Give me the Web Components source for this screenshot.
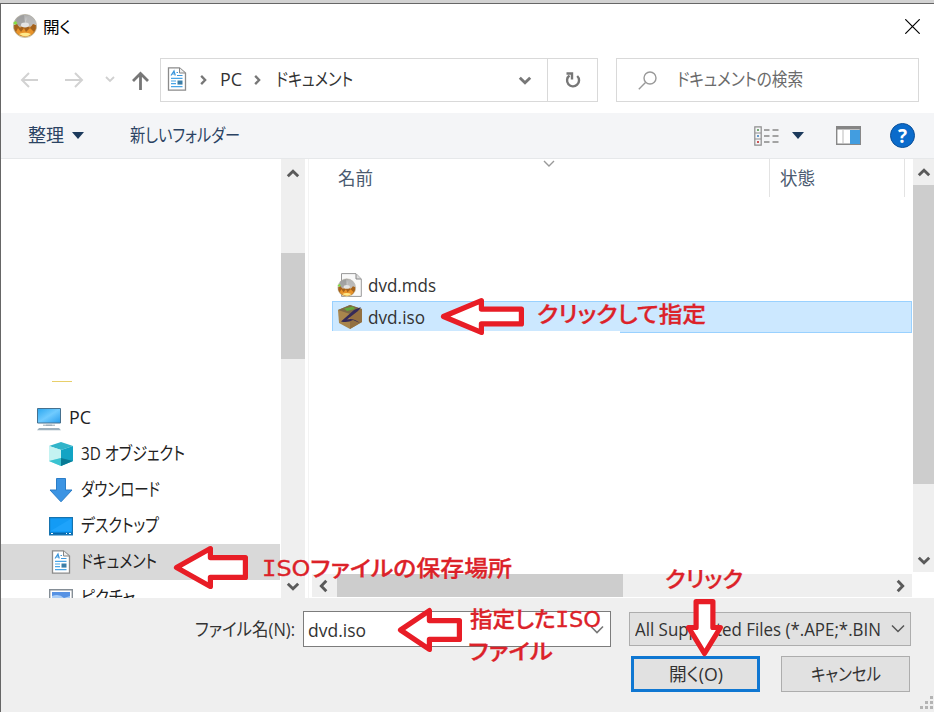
<!DOCTYPE html>
<html lang="ja">
<head>
<meta charset="utf-8">
<title>開く</title>
<style>
body {
  display: flow-root;
  margin: 0;
  width: 934px;
  height: 712px;
  overflow: hidden;
  position: relative;
  background: #d2d2d2;
  font: 18px/1 "Open Sans", "Noto Sans CJK JP", sans-serif;
  color: #333;
}
</style>
</head>
<body>
<file-dialog>
  <title-bar><fit-text width="28">開く</fit-text></title-bar>
  <address-row></address-row>
  <command-bar></command-bar>
  <nav-pane>
    <nav-item icon="pc" root><fit-text width="22">PC</fit-text></nav-item>
    <nav-item icon="cube"><fit-text width="104">3D オブジェクト</fit-text></nav-item>
    <nav-item icon="down"><fit-text width="79">ダウンロード</fit-text></nav-item>
    <nav-item icon="desk"><fit-text width="78">デスクトップ</fit-text></nav-item>
    <nav-item icon="doc" selected><fit-text width="76">ドキュメント</fit-text></nav-item>
    <nav-item icon="pic"><fit-text width="54">ピクチャ</fit-text></nav-item>
  </nav-pane>
  <file-list>
    <file-row icon="mds"><fit-text width="68">dvd.mds</fit-text></file-row>
    <file-row icon="iso" selected><fit-text width="57">dvd.iso</fit-text></file-row>
  </file-list>
  <dialog-footer></dialog-footer>
</file-dialog>

<call-arrow style="left:440px;top:298px" w="84" h="37" neck="44" shaft="8.5"></call-arrow>
<call-arrow style="left:173px;top:546px" w="75" h="43" neck="40" shaft="9"></call-arrow>
<call-arrow style="left:397px;top:607.5px" w="65" h="44" neck="35" shaft="10"></call-arrow>
<call-arrow style="left:685.5px;top:599px" w="37" h="58.5" neck="30" shaft="7.5" down></call-arrow>
<call-note style="left:537px;top:303px"><fit-text width="169">クリックして指定</fit-text></call-note>
<call-note style="left:262px;top:557px"><fit-text width="250"><i>I</i>SOファイルの保存場所</fit-text></call-note>
<call-note style="left:665px;top:568px"><fit-text width="78">クリック</fit-text></call-note>
<call-note style="left:470px;top:608px"><fit-text width="131">指定した<i>I</i>SO</fit-text></call-note>
<call-note style="left:468px;top:640px"><fit-text width="85">ファイル</fit-text></call-note>

<script>
// attaches an open root filled with the class's template()
class Base extends HTMLElement {
	constructor() {
		super();
		this.attachShadow({mode: 'open'}).innerHTML = this.template();
	}
}

const disc = (x, y, s) => `
<g transform="translate(${x} ${y}) scale(${s})">
  <circle cx="12" cy="12" r="11.6" fill="url(#g)" stroke="#aaa28e" stroke-width=".6"/>
  <path d="M1 10Q3 2 11 1L12 9L7 12Z" fill="#999" opacity=".8"/>
  <path d="M12 9L16 1Q22 4 23 10L17 12Z" fill="#b5b5b5" opacity=".8"/>
  <path d="M1 11L4 10L7 14L10 12H14L17 14L20 10L23 11Q23 18 18 21Q12 24 6 21Q1 18 1 11Z" fill="#a5621c"/>
  <path d="M3 18L5 14L8 18L11 14L13 18L17 14L21 18Q18 22.4 12 22.4Q6.5 22.4 3 18Z" fill="#e8932a"/>
  <path d="M6 20Q12 17.5 18 20Q13 24.5 6 20Z" fill="#ffe98a"/>
  <ellipse cx="12" cy="11" rx="4" ry="2.4" fill="#e4e4e4"/>
  <path d="M0 9L2.5 7L4.5 9L2.5 11Z" fill="#85dc45"/>
</g>`;
const grad = `<defs><linearGradient id="g" x2="0" y2="1">
  <stop stop-color="#aaa"/><stop offset=".45" stop-color="#dedede"/><stop offset=".6" stop-color="#b87526"/><stop offset="1" stop-color="#fff3bb"/>
</linearGradient></defs>`;

const ICONS = {
	app: grad + disc(0, 0, 1),
	doc: `<path d="M3.5 .8H14.5L20.5 6V23.2H3.5Z" fill="#fff" stroke="#8b8b8b" stroke-width="1.3"/>
		<path d="M14.5 1V6H20" fill="#eee" stroke="#858585"/>
		<path d="M6 8.5L9 4L10.3 8.5M7 7H10M11.5 5.5H13M12 8.5H17.5" stroke="#3f98dc" stroke-width="1.2" fill="none"/>
		<path d="M6 11.3H17.5M6 14H11M6 16.7H11M6 19.7H17.5" stroke="#4aa5e6" stroke-width="1.2"/>
		<path d="M12.5 13.5H17.5V17.6H12.5Z" fill="#3b7ea8"/>`,
	pc: `<path d="M.5 2.5H23.5V17H.5Z" fill="url(#p)" stroke="#46708e"/>
		<path d="M9 18.5H15V20H9Z" fill="#b5c3cb"/><path d="M6 19.2H18" stroke="#95a7b2"/>
		<path d="M2 22H22L24 24.3H0Z" fill="#9cb0bd"/>
		<defs><linearGradient id="p" x2="1" y2="1"><stop stop-color="#29a6ef"/><stop offset=".5" stop-color="#70cbff"/><stop offset="1" stop-color="#279cec"/></linearGradient></defs>`,
	cube: `<path d="M0 4L12 0L24 4L12 8Z" fill="#31b4c9"/><path d="M0 4L12 8V24L0 19Z" fill="#8fe3e8"/>
		<path d="M0 4L12 8V16L0 19Z" fill="#c4f3f2"/>
		<path d="M12 8L24 4V19L12 24Z" fill="#12a4c4"/><path d="M12 16L24 19L12 24Z" fill="#087a95"/><path d="M0 19L12 16V24Z" fill="#3ac3d1"/>`,
	down: `<path d="M7.5 .5H16.5V12H23L12 23.8L1 12H7.5Z" fill="#3c94e3" stroke="#2b7dc7"/>`,
	desk: `<path d="M.6 3.6H23.4V20.8H.6Z" fill="#139bf5" stroke="#1673af" stroke-width="1.2"/>
		<path d="M1.5 17L22.5 4.5V17Z" fill="#1ea3fb"/><path d="M1 18.5H23V20.5H1Z" fill="#0768ac"/><path d="M2 19.5H4M17 19.5H18M20 19.5H22" stroke="#fff"/>`,
	pic: `<path d="M.7 3.7H23.3V20.3H.7Z" fill="#fff" stroke="#858e96" stroke-width="1.4"/>
		<path d="M3 6H21V18H3Z" fill="#5792e3"/><path d="M3 10Q10 7 15 12L21 10V15H3Z" fill="#a9cdf7"/>`,
	mds: grad + `<path d="M3.5 .6H18L23.3 6V23.4H3.5Z" fill="#f9f9f9" stroke="#999"/><path d="M18 1V6H23" fill="#ddd" stroke="#888"/>` + disc(-.5, 5.5, .77),
	iso: `<path d="M0 5L12 0L24 4V17L12 24L1 18Z" fill="#a8854c"/><path d="M12 9L24 4V17L12 24Z" fill="#937040"/>
		<path d="M0 5L12 0L24 4L12 9Z" fill="#7d6946"/><path d="M6 3.5L15 1.5L17 4L9 6Z" fill="#63a83b"/>
		<path d="M23 2L16 5L3 16.5Q10 18 15 15L22 18Q15 12.5 9 14.5L20 6Z" fill="#352a58"/>`
};

const chevron = dir => {
	var turn = {down: 0, up: 180, left: 90, right: -90}[dir];
	return `<svg width="14" height="14" viewBox="0 0 14 14" style="transform:rotate(${turn}deg)"><path d="M1.8 4.7L7 9.7L12.2 4.7" fill="none" stroke="#5a5a5a" stroke-width="2.9"/></svg>`;
};

customElements.define('ui-icon', class extends HTMLElement {
	connectedCallback() {
		if (this.shadowRoot) return;
		this.attachShadow({mode: 'open'}).innerHTML = `
<style>:host { display: block; flex: none; width: 24px; height: 24px; } svg { display: block; overflow: visible; }</style>
<svg width="24" height="24" viewBox="0 0 24 24">${ICONS[this.getAttribute('name')]}</svg>`;
	}
});

customElements.define('file-dialog', class extends Base {
	template() {
		return `
<style>
:host {
  display: grid;
  box-sizing: border-box;
  width: 934px;
  height: 709px;
  margin-top: 3px;
  grid-template-columns: 308px 1fr;
  grid-template-rows: 46px 63px 46px 439px 1fr;
  border-top: 1px solid #666;
  border-left: 1px solid #666;
  background: #fff;
}
::slotted(title-bar), ::slotted(address-row), ::slotted(command-bar), ::slotted(dialog-footer) { grid-column: 1 / 3; }
</style>
<slot></slot>`;
	}
});

customElements.define('title-bar', class extends Base {
	template() {
		return `
<style>
:host { display: flex; align-items: center; padding: 0 14px 0 12px; gap: 6px; font-size: 16px; color: #000; }
.close { margin: -1px 0 0 auto; }
ui-icon { margin-top: -2px; }
</style>
<ui-icon name="app"></ui-icon><slot></slot>
<svg class="close" width="15" height="15"><path d="M.3 .3L14.7 14.7M14.7 .3L.3 14.7" stroke="#000" stroke-width="1.2"/></svg>`;
	}
});

customElements.define('address-row', class extends Base {
	template() {
		return `
<style>
:host { display: flex; align-items: flex-start; padding: 8px 15px 0 18px; }
.nav { display: block; width: 141px; height: 44px; flex: none; }
.box { box-sizing: border-box; height: 44px; border: 1px solid #d9d9d9; display: flex; align-items: center; }
fit-text { margin-top: -2px; }
.path { width: 388px; padding-left: 4px; }
.path ui-icon { margin-top: -3px; }
.path > svg { flex: none; scale: .8; margin: 0 10px 0 7px; }
.drop { margin-left: auto; margin-right: 15px; display: flex; }
.path svg path { stroke: #777; }
.reload { width: 51px; margin-left: -1px; justify-content: center; }
.search { width: 303px; margin-left: 18px; padding-left: 21px; gap: 20px; color: #6b6b6b; }
</style>
<svg class="nav" viewBox="0 0 141 44" fill="none">
  <path d="M19 22H3M10 15L3 22L10 29" stroke="#d2d2d2" stroke-width="2"/>
  <path d="M46 22H63M56 15L63 22L56 29" stroke="#d2d2d2" stroke-width="2"/>
  <path d="M87 19L91 23L95 19" stroke="#d0d0d0" stroke-width="1.8"/>
  <path d="M121.5 32V16M114 23L121.5 15.5L129 23" stroke="#777" stroke-width="2.8"/>
</svg>
<div class="box path">
  <ui-icon name="doc"></ui-icon>
  ${chevron('right')}<fit-text width="22" style="margin-right:1px">PC</fit-text>
  ${chevron('right')}<fit-text width="77" style="margin-left:2px">ドキュメント</fit-text>
  <span class="drop">${chevron('down')}</span>
</div>
<div class="box reload"><svg width="18" height="18" viewBox="0 0 18 18" fill="none" stroke="#777" stroke-width="2.4"><path d="M13.2 5A6 6 0 1 1 5.5 4.5"/><path d="M2.5 2.5H8V8.5"/></svg></div>
<div class="box search">
  <svg width="19" height="19" fill="none" stroke="#999" stroke-width="1.4"><circle cx="12" cy="7" r="6"/><path d="M7.5 11.5L.8 18.2"/></svg>
  <fit-text width="126">ドキュメントの検索</fit-text>
</div>`;
	}
});

customElements.define('command-bar', class extends Base {
	template() {
		return `
<style>
:host { display: flex; align-items: center; box-sizing: border-box; padding: 0 19px 0 27px; background: #f4f5f7; border-bottom: 1px solid #e6e8ea; color: #2b4363; }
fit-text { margin-top: -2px; }
.tri { width: 12px; height: 7px; background: #1c3a5c; clip-path: polygon(0 0, 100% 0, 50% 100%); margin: 0 46px 0 8px; }
.help { display: grid; place-items: center; box-sizing: border-box; width: 25px; height: 25px; border-radius: 50%; background: #0a6bcb; border: 1px solid #0a4f98; color: #fff; font: bold 19px "Open Sans"; line-height: 22px; }
</style>
<fit-text width="36">整理</fit-text><div class="tri"></div>
<fit-text width="110">新しいフォルダー</fit-text>
<svg width="25" height="20" viewBox="0 0 25 20" style="margin-left:auto" fill="none">
  <path d="M.8 .8H7.2V19.2H.8ZM1 7H7M1 13H7" stroke="#8d8d8d" stroke-width="1.2"/>
  <path d="M10 4H15.5M18.5 4H24.5M10 10H15.5M18.5 10H24.5M10 16H15.5M18.5 16H24.5" stroke="#888" stroke-width="1.4"/>
  <path d="M3 4H5" stroke="#7a7" stroke-width="2"/><path d="M3 10H5" stroke="#69c" stroke-width="2"/><path d="M3 16H5" stroke="#c55" stroke-width="2"/>
</svg>
<div class="tri" style="margin:0 32px 0 13px"></div>
<svg width="25" height="19" viewBox="0 0 25 19"><path d="M.7 .7H24.3V18.3H.7Z" fill="#fff" stroke="#888" stroke-width="1.4"/><path d="M0 0H25V3.5H0Z" fill="#858585"/><path d="M7 4V18" stroke="#bbb"/><path d="M14 4H24V18H14Z" fill="#429de0"/></svg>
<div class="help" style="margin-left:29px">?</div>`;
	}
});

// start/size place the thumb along the track
customElements.define('scroll-bar', class extends HTMLElement {
	connectedCallback() {
		if (this.shadowRoot) return;
		var flat = this.hasAttribute('flat');
		this.attachShadow({mode: 'open'}).innerHTML = `
<style>
:host { display: flex; flex-direction: ${flat ? 'row' : 'column'}; justify-content: space-between; align-items: center; background: #efefef; box-sizing: border-box; }
.end { width: 24px; height: 24px; display: flex; flex: none; align-items: center; justify-content: center; }
.thumb { background: #cdcdcd; flex: none; align-self: stretch; margin-${flat ? 'left' : 'top'}: ${this.getAttribute('start')}px; ${flat ? 'width' : 'height'}: ${this.getAttribute('size')}px; margin-${flat ? 'right' : 'bottom'}: auto; }
</style>
<div class="end">${chevron(flat ? 'left' : 'up')}</div>
<div class="thumb"></div>
<div class="end">${chevron(flat ? 'right' : 'down')}</div>`;
	}
});

customElements.define('nav-pane', class extends Base {
	template() {
		return `
<style>
:host { display: flex; overflow: hidden; border-right: 1px solid #f3f3f3; }
.items { flex: 1; padding-top: 222px; height: 217px; overflow: hidden; }
.edge { width: 20px; height: 1px; background: #e8cf6a; margin: 0 0 18px 51px; }
scroll-bar { width: 24px; margin-right: 3px; padding-top: 3px; }
</style>
<div class="items"><div class="edge"></div><slot></slot></div>
<scroll-bar start="67" size="106"></scroll-bar>`;
	}
});

customElements.define('nav-item', class extends Base {
	template() {
		return `
<style>
:host { display: flex; align-items: center; height: 36px; padding-left: 48px; gap: 8px; color: #222; }
:host([root]) { padding-left: 36px; }
:host([selected]) { background: #d9d9d9; margin-right: 1px; }
::slotted(fit-text) { margin-top: -2px; }
</style>
<ui-icon name="${this.getAttribute('icon')}"></ui-icon><slot></slot>`;
	}
});

customElements.define('file-list', class extends Base {
	template() {
		return `
<style>
:host { display: grid; grid-template-columns: 604px 21px; grid-template-rows: 413px 26px; overflow: hidden; }
.head { display: flex; height: 38px; color: #4a5a70; position: relative; }
.col { display: flex; align-items: center; box-sizing: border-box; border-right: 1px solid #e3e3e3; }
.col:first-child { width: 461px; padding-left: 29px; }
.col + .col { width: 135px; padding-left: 10px; }
.sort { position: absolute; left: 234px; top: 1px; }
.rows { padding: 72px 1px 0 23px; }
scroll-bar.v { height: 413px; padding-top: 2px; }
scroll-bar.h { height: 23px; margin: 2px 1px 0 3px; }
</style>
<div>
  <div class="head">
    <div class="col"><fit-text width="35">名前</fit-text></div>
    <div class="col"><fit-text width="35">状態</fit-text></div>
    <svg class="sort" width="12" height="7"><path d="M1 1L6 6L11 1" fill="none" stroke="#999" stroke-width="1.4"/></svg>
  </div>
  <div class="rows"><slot></slot></div>
</div>
<scroll-bar class="v" start="0" size="299"></scroll-bar>
<scroll-bar class="h" flat start="1" size="286"></scroll-bar>`;
	}
});

customElements.define('file-row', class extends Base {
	template() {
		return `
<style>
:host { display: flex; align-items: center; box-sizing: border-box; height: 32px; padding-left: 6px; gap: 6px; color: #333; position: relative; }
:host([selected]) { background: #cce8ff; border: 1px solid #99d1ff; padding-left: 5px; }
/* the outline stops short under the name column */
:host([selected])::after { content: ""; position: absolute; left: -1px; bottom: -1px; width: 288px; height: 2px; background: #fff; }
</style>
<ui-icon name="${this.getAttribute('icon')}"></ui-icon><slot></slot>`;
	}
});

customElements.define('dialog-footer', class extends Base {
	template() {
		return `
<style>
:host { display: flex; flex-direction: column; gap: 9px; background: #efefef; padding-top: 13px; position: relative; }
.line { display: flex; align-items: center; }
.line > * { box-sizing: border-box; }
.input { display: flex; align-items: center; justify-content: space-between; width: 308px; height: 36px; border: 1px solid #7c7c7c; background: #fff; padding: 2px 6px 0 4px; margin: 0 18px 0 8px; }
.select { display: flex; align-items: center; justify-content: space-between; width: 282px; height: 34px; border: 1px solid #adadad; background: #e1e1e1; padding: 0 5px 0 5px; }
.btn { width: 129px; height: 36px; border: 1px solid #adadad; background: #e1e1e1; display: flex; align-items: center; justify-content: center; }
.main { border: 3px solid #0f77d2; }
.btn fit-text { margin-top: -1px; }
.grip { position: absolute; right: 1px; bottom: 3px; }
</style>
<div class="line" style="padding-left:194px">
  <fit-text width="100">ファイル名(N):</fit-text>
  <div class="input"><fit-text width="58">dvd.iso</fit-text><svg width="14" height="10"><path d="M1 1.5L7 7.5L13 1.5" fill="none" stroke="#777" stroke-width="1.6"/></svg></div>
  <div class="select"><fit-text width="246">All Supported Files (*.APE;*.BIN</fit-text><svg width="14" height="10"><path d="M1 1.5L7 7.5L13 1.5" fill="none" stroke="#555" stroke-width="1.5"/></svg></div>
</div>
<div class="line" style="padding-left:630px;gap:21px">
  <div class="btn main"><fit-text width="54">開く(O)</fit-text></div>
  <div class="btn"><fit-text width="70">キャンセル</fit-text></div>
</div>
<svg class="grip" width="13" height="13" fill="#b4b4b4"><path d="M10 0h3v3h-3zM5 5h3v3h-3zM10 5h3v3h-3zM0 10h3v3h-3zM5 10h3v3h-3zM10 10h3v3h-3z"/></svg>`;
	}
});

// block arrow; w/h are the outer size, neck is the head's length, shaft its inset
customElements.define('call-arrow', class extends HTMLElement {
	connectedCallback() {
		var [w, h, n, s] = ['w', 'h', 'neck', 'shaft'].map(a => +this.getAttribute(a));
		var p = 2.6;
		var pts = this.hasAttribute('down')
			? [[w / 2, h - 4], [p, h - n], [s + p, h - n], [s + p, p], [w - s - p, p], [w - s - p, h - n], [w - p, h - n]]
			: [[3.5, h / 2], [n - p, p], [n - p, s + p], [w - p, s + p], [w - p, h - s - p], [n - p, h - s - p], [n - p, h - p]];
		this.attachShadow({mode: 'open'}).innerHTML = `
<style>:host { display: block; position: absolute; } svg { display: block; overflow: visible; }</style>
<svg width="${w}" height="${h}"><polygon points="${pts.join(' ')}" fill="#fff" stroke="#e81d26" stroke-width="5.2" stroke-linejoin="round"/></svg>`;
	}
});

customElements.define('call-note', class extends Base {
	template() {
		return `
<style>
:host { display: block; position: absolute; font: 500 22px/24px "DejaVu Sans", "Noto Sans CJK JP", sans-serif; color: #dc2229; -webkit-text-stroke: .3px #dc2229; }
</style>
<slot></slot>`;
	}
});

// squeezes its line to the given width; goes last so that fonts are already inherited
customElements.define('fit-text', class extends Base {
	connectedCallback() {
		var s = this.shadowRoot.querySelector('span');
		var w = +this.getAttribute('width');
		this.style.width = w + 'px';
		s.style.transform = `scaleX(${w / s.getBoundingClientRect().width})`;
	}
	template() {
		return `
<style>
:host { display: block; flex: none; white-space: nowrap; font-feature-settings: "palt"; }
span { display: inline-block; transform-origin: 0 50%; }
::slotted(i) { font-family: "DejaVu Sans Mono"; font-style: normal; }
</style>
<span><slot></slot></span>`;
	}
});
</script>
</body>
</html>
